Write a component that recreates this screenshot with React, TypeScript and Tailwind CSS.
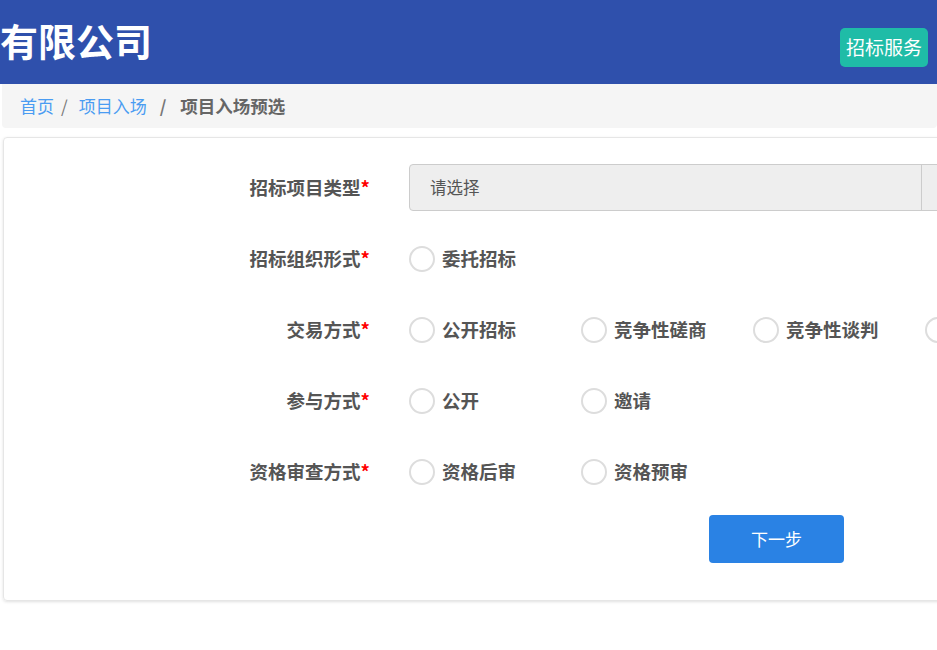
import React, { useState } from "react";

const font = { fontFamily: '"Noto Sans CJK SC", "Noto Sans", sans-serif' };

type Row = { label: string; options: string[] };

const rows: Row[] = [
  { label: "招标组织形式", options: ["委托招标"] },
  { label: "交易方式", options: ["公开招标", "竞争性磋商", "竞争性谈判", "单一来源"] },
  { label: "参与方式", options: ["公开", "邀请"] },
  { label: "资格审查方式", options: ["资格后审", "资格预审"] },
];

const Label = ({ text }: { text: string }) => (
  <div className="w-[366px] shrink-0 text-right text-[18.5px] font-bold text-[#555] whitespace-nowrap">
    {text}
    <span className="text-[#f00]">*</span>
  </div>
);

export default function App() {
  const [picked, setPicked] = useState<Record<string, string>>({});

  return (
    <div className="w-[937px] h-[650px] overflow-hidden bg-white" style={font}>
      <header className="h-[84px] bg-[#2f50ac] flex items-center justify-between">
        <h1 className="text-[38px] font-bold text-white leading-none -mt-[4px]">有限公司</h1>
        <button className="mr-[9px] mt-[11px] h-[39px] px-[6px] rounded-[5px] bg-[#1fbca7] text-white text-[19px]">
          招标服务
        </button>
      </header>

      <nav className="ml-[2px] h-[44px] bg-[#f5f5f5] rounded-b-[4px] flex items-center pl-[18px] text-[17px]">
        <a className="text-[#4a9cf2]">首页</a>
        <span className="mx-[7px] text-[#777]">/</span>
        <a className="ml-[4px] text-[#4a9cf2]">项目入场</a>
        <span className="ml-[13px] mr-[14px] text-[#777] font-bold">/</span>
        <span className="font-bold text-[#666] text-[17.5px]">项目入场预选</span>
      </nav>

      <div className="ml-[3px] mt-[9px] h-[464px] border border-[#e6e6e6] rounded-[4px] shadow-[0_1px_3px_rgba(0,0,0,0.12)] pt-[26px] w-[960px]">
        <div className="flex flex-col gap-[24px]">
          <div className="flex items-center h-[47px]">
            <Label text="招标项目类型" />
            <div className="ml-[39px] w-[600px] h-[47px] bg-[#eee] border border-[#ccc] rounded-[4px] flex items-center">
              <span className="w-[511px] pl-[20px] text-[16.5px] text-[#555]">请选择</span>
              <div className="w-[1px] h-full bg-[#ccc]"></div>
            </div>
          </div>

          {rows.map((r) => (
            <div key={r.label} className="flex items-center h-[47px]">
              <Label text={r.label} />
              <div className="ml-[39px] flex">
                {r.options.map((o) => (
                  <label
                    key={o}
                    className="w-[172px] flex items-center gap-[7px] cursor-pointer"
                    onClick={() => setPicked({ ...picked, [r.label]: o })}
                  >
                    <span
                      className={`w-[26px] h-[26px] shrink-0 rounded-full border-2 ${
                        picked[r.label] === o ? "border-[#2a82e4] bg-[#2a82e4]" : "border-[#ddd] bg-white"
                      }`}
                    ></span>
                    <span className="text-[18.5px] font-bold text-[#555] whitespace-nowrap">{o}</span>
                  </label>
                ))}
              </div>
            </div>
          ))}
        </div>

        <div className="mt-[20px] pl-[705px]">
          <button className="w-[135px] h-[48px] rounded-[4px] bg-[#2a82e4] text-white text-[17px]">下一步</button>
        </div>
      </div>
    </div>
  );
}
